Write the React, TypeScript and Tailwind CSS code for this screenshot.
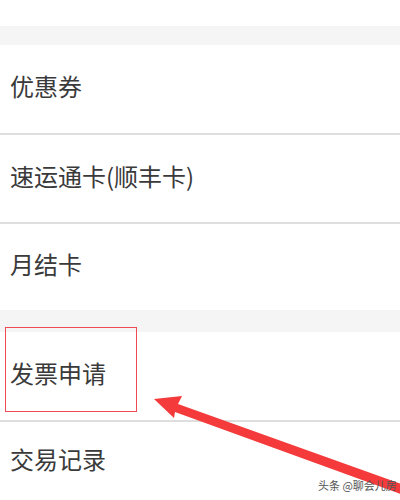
import React from "react";

const font = { fontFamily: '"Noto Sans CJK SC", "Noto Sans", sans-serif' };

function Row({ label, border = true, h }: { label: string; border?: boolean; h: string }) {
  return (
    <div className={`${h} flex items-center bg-white pl-[10px] pb-[6px] ${border ? "border-b-2 border-[#dedede]" : ""}`}>
      <span className="text-[24px] leading-none text-[#3a3a3a]">{label}</span>
    </div>
  );
}

export default function App() {
  return (
    <div className="relative w-[400px] h-[500px] overflow-hidden bg-white" style={font}>
      <div className="h-[26px] bg-white" />
      <div className="h-[19px] bg-[#f5f5f5]" />
      <Row label="优惠券" h="h-[90px]" />
      <Row label="速运通卡(顺丰卡)" h="h-[89px]" />
      <Row label="月结卡" border={false} h="h-[86px]" />
      <div className="h-[22px] bg-[#f5f5f5]" />
      <Row label="发票申请" h="h-[90px]" />
      <Row label="交易记录" border={false} h="h-[80px]" />

      <div className="absolute left-[5px] top-[327px] w-[132px] h-[85px] border border-[#f04a55]" />

      <svg className="absolute left-0 top-0 pointer-events-none" width="400" height="500" viewBox="0 0 400 500">
        <polygon
          points="154,399 182,396 178,404 410,487 406,496 175,412 174,418"
          fill="#f43a3a"
        />
      </svg>

      <div className="absolute left-[318px] top-[480px] whitespace-nowrap text-[11px] leading-none text-[#555]">
        头条 @聊会儿房
      </div>
    </div>
  );
}
